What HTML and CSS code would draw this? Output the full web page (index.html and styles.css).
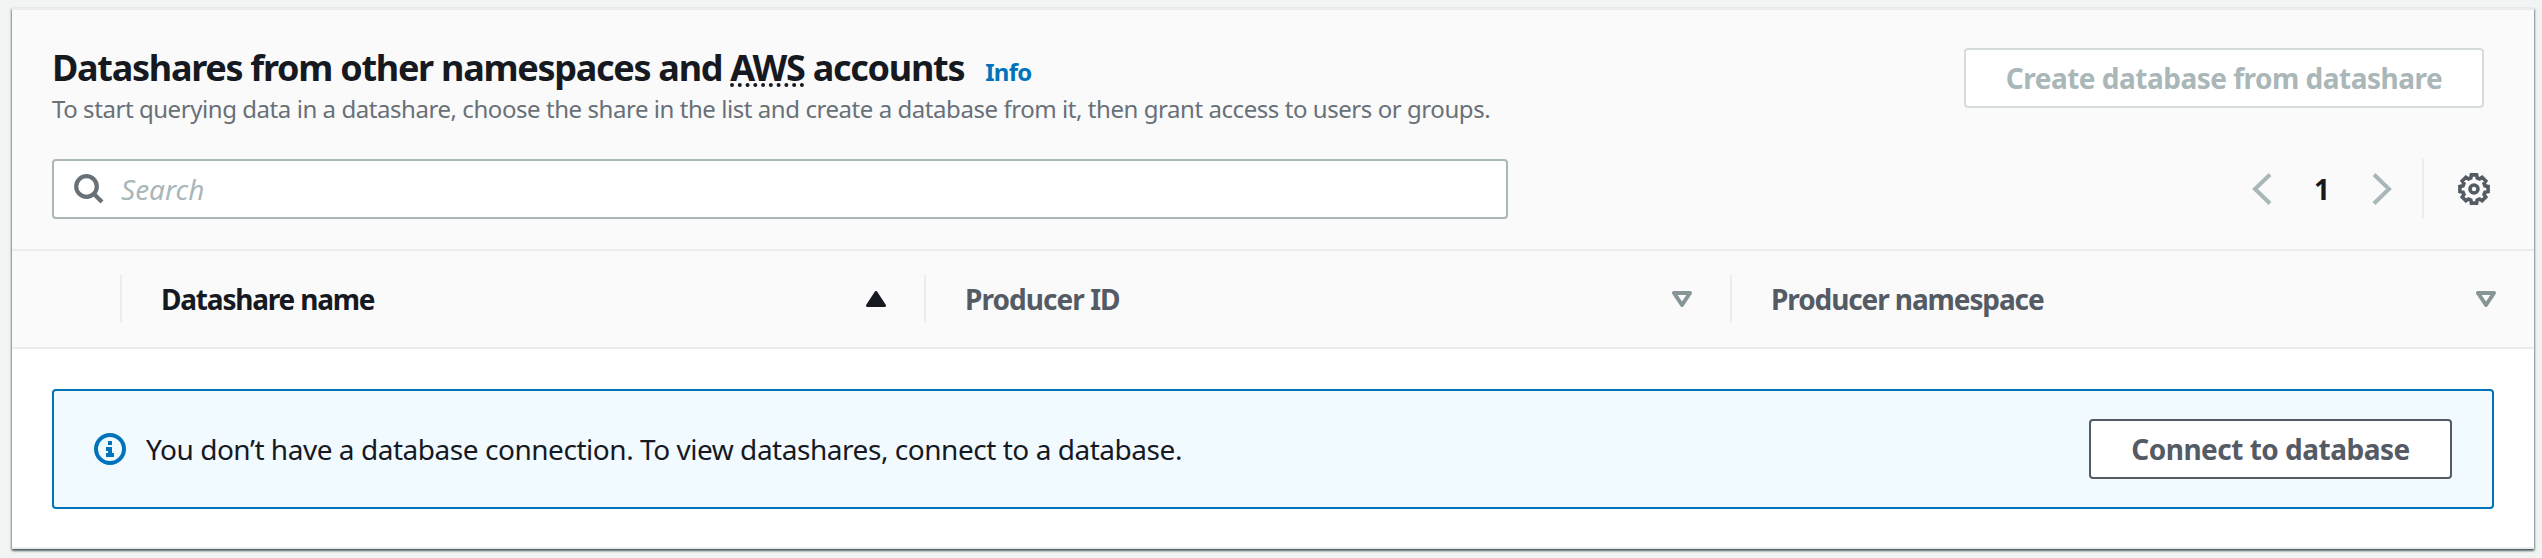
FILE: index.html
```html
<!DOCTYPE html>
<html lang="en">
<head>
<meta charset="utf-8">
<title>Datashares</title>
<link rel="stylesheet" href="styles.css">
</head>
<body>
<section class="panel">
  <header class="panel-header">
    <div class="heading-row">
      <div class="heading">
        <h2 class="title"><span class="title-text">Datashares from other namespaces and <abbr class="abbr">AWS</abbr> accounts</span><a class="info">Info</a></h2>
        <p class="description">To start querying data in a datashare, choose the share in the list and create a database from it, then grant access to users or groups.</p>
      </div>
      <button class="button button-disabled" disabled>Create database from datashare</button>
    </div>
    <div class="tools">
      <div class="search">
        <svg class="search-icon" viewBox="0 0 32 32"><circle cx="13.500" cy="13.500" r="10.300"/><path d="M20.500 20.500L29 29"/></svg>
        <span class="placeholder">Search</span>
      </div>
      <div class="pager">
        <svg class="chevron" viewBox="0 0 20 32"><path d="M18 1.500L3 16L18 30.500"/></svg>
        <span class="page">1</span>
        <svg class="chevron" viewBox="0 0 20 32"><path d="M2 1.500L17 16L2 30.500"/></svg>
        <span class="divider"></span>
        <svg class="gear" viewBox="0 0 32 32"><path d="M13.400 1.900H18.600L19.200 5L21.500 5.960L24.100 4.200L27.800 7.900L26.040 10.500L27 12.800L30.100 13.400V18.600L27 19.200L26.040 21.500L27.800 24.100L24.100 27.800L21.500 26.040L19.200 27L18.600 30.100H13.400L12.800 27L10.500 26.040L7.900 27.800L4.200 24.100L5.960 21.500L5 19.200L1.900 18.600V13.400L5 12.800L5.960 10.500L4.200 7.900L7.900 4.200L10.500 5.960L12.800 5z"/><circle cx="16" cy="16" r="4"/></svg>
      </div>
    </div>
  </header>
  <div class="columns">
    <div class="column column-select"></div>
    <div class="column column-sorted"><span class="label">Datashare name</span><svg class="sort sort-filled" viewBox="0 0 20 16"><path d="M10 1.500L18.500 14.500H1.500z"/></svg></div>
    <div class="column"><span class="label label-id">Producer ID</span><svg class="sort" viewBox="0 0 20 16"><path d="M2 2H18L10 14z"/></svg></div>
    <div class="column"><span class="label">Producer namespace</span><svg class="sort" viewBox="0 0 20 16"><path d="M2 2H18L10 14z"/></svg></div>
  </div>
  <div class="content">
    <div class="alert">
      <svg class="info-icon" viewBox="0 0 32 32"><circle cx="16" cy="16" r="14"/><path d="M14 8h4v4h-4zM12 14h6v6h2v4h-8v-4h2v-2h-2z"/></svg>
      <span class="message">You don’t have a database connection. To view datashares, connect to a database.</span>
      <button class="button">Connect to database</button>
    </div>
  </div>
</section>
</body>
</html>
```
FILE: styles.css
```css
* { box-sizing: border-box; }
body {
  margin: 0;
  padding: 8px 8px 9px 12px;
  background: #f2f3f3;
  font-family: "Noto Sans", "Open Sans", sans-serif;
  font-size: 28px;
  color: #16191f;
}
svg { display: block; flex: none; fill: none; }
.panel {
  width: 2522px;
  height: 541px;
  background: #fff;
  border-top: 2px solid #eaeded;
  border-bottom: 2px solid #eaeded;
  box-shadow: 0 2px 2px 0 rgba(0, 28, 36, .5), 1px 1px 2px 0 rgba(0, 28, 36, .3), -1px 1px 2px 0 rgba(0, 28, 36, .3);
}
.panel-header {
  height: 241px;
  padding: 34px 32px 0 40px;
  background: #fafafa;
  border-bottom: 2px solid #eaeded;
}
.heading-row {
  display: flex;
  justify-content: space-between;
  align-items: flex-start;
  height: 115px;
  padding-right: 18px;
}
.title {
  display: flex;
  align-items: baseline;
  gap: 21px;
  height: 46px;
  margin: 1px 0 0;
  font-size: 36px;
  line-height: 46px;
  letter-spacing: -1.28px;
  white-space: nowrap;
}
.abbr {
  text-decoration: underline dotted #16191f 4px;
  text-underline-offset: 2px;
  text-decoration-skip-ink: none;
}
.info { font-size: 24px; line-height: 32px; letter-spacing: -.7px; color: #0073bb; }
.description {
  margin: 0;
  font-size: 24px;
  line-height: 36px;
  letter-spacing: -.44px;
  color: #687078;
  white-space: nowrap;
}
.button {
  width: 363px;
  height: 60px;
  padding: 0;
  border: 2px solid #545b64;
  border-radius: 4px;
  background: #fff;
  font: 700 28px/56px "Noto Sans", "Open Sans", sans-serif;
  letter-spacing: -.5px;
  color: #545b64;
  white-space: nowrap;
}
.button-disabled {
  width: 520px;
  margin-top: 4px;
  border-color: #d5dbdb;
  color: #aab7b8;
}
.tools { display: flex; justify-content: space-between; }
.search {
  display: flex;
  align-items: center;
  gap: 16px;
  width: 1456px;
  height: 60px;
  padding-left: 19px;
  border: 2px solid #aab7b8;
  border-radius: 4px;
  background: #fff;
}
.search-icon { width: 32px; height: 32px; stroke: #687078; stroke-width: 4.200; }
.placeholder { font-style: italic; color: #aab7b8; }
.pager { display: flex; align-items: center; padding-right: 12px; }
.chevron { width: 20px; height: 32px; stroke: #aab7b8; stroke-width: 4; }
.page { width: 100px; text-align: center; font-weight: 700; }
.divider { width: 2px; height: 60px; margin: 0 34px 0 30px; background: #eaeded; }
.gear { width: 32px; height: 32px; stroke: #545b64; stroke-width: 3.600; }
.columns {
  display: grid;
  grid-template-columns: 110px 804px 806px 802px;
  height: 98px;
  padding: 24px 0;
  background: #fafafa;
  border-bottom: 2px solid #eaeded;
}
.column {
  display: flex;
  align-items: center;
  justify-content: space-between;
  padding: 0 38px 0 39px;
  border-right: 2px solid #eaeded;
  font-weight: 700;
  letter-spacing: -1.1px;
  color: #545b64;
}
.column:last-child { border-right: 0; }
.column-sorted { color: #16191f; letter-spacing: -1.2px; }
.label-id { letter-spacing: -.95px; }
.sort { width: 20px; height: 16px; stroke: #879596; stroke-width: 4; stroke-linejoin: round; }
.sort-filled { fill: #16191f; stroke: #16191f; stroke-width: 3; }
.content { padding: 40px; }
.alert {
  display: flex;
  align-items: center;
  height: 120px;
  padding: 0 40px;
  border: 2px solid #0073bb;
  border-radius: 4px;
  background: #f1faff;
}
.info-icon { width: 32px; height: 32px; margin-right: 20px; }
.info-icon circle { stroke: #0073bb; stroke-width: 4; }
.info-icon path { fill: #0073bb; }
.message { flex: 1; letter-spacing: -.46px; white-space: nowrap; }
```
